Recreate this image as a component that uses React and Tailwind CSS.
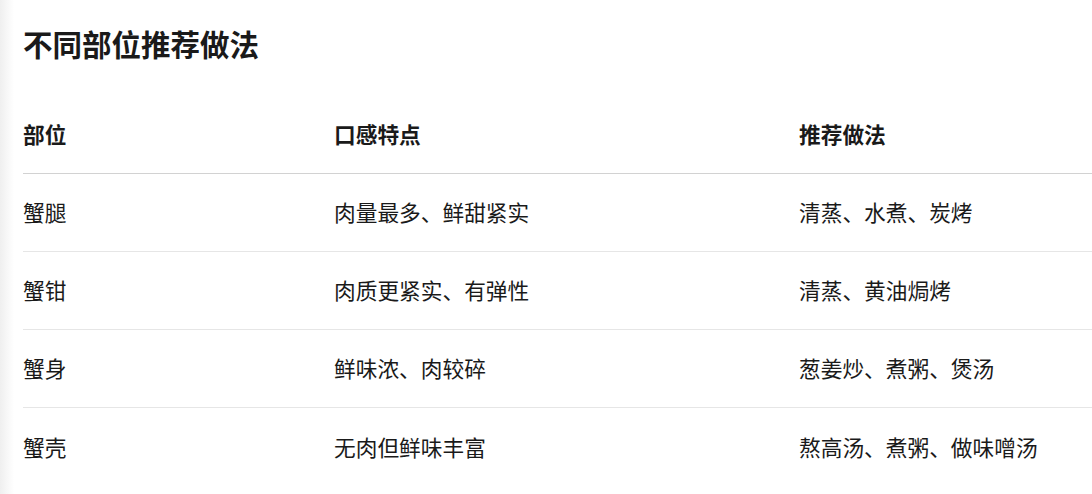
const rows = [
  { part: "蟹腿", taste: "肉量最多、鲜甜紧实", cook: "清蒸、水煮、炭烤" },
  { part: "蟹钳", taste: "肉质更紧实、有弹性", cook: "清蒸、黄油焗烤" },
  { part: "蟹身", taste: "鲜味浓、肉较碎", cook: "葱姜炒、煮粥、煲汤" },
  { part: "蟹壳", taste: "无肉但鲜味丰富", cook: "熬高汤、煮粥、做味噌汤" },
];

export default function App() {
  return (
    <div
      className="min-h-screen w-[1092px] h-[494px] overflow-hidden bg-[linear-gradient(to_right,#efefef,#ffffff_14px)] text-[#1a1a1a]"
      style={{ fontFamily: '"Noto Sans CJK SC", "Noto Sans", sans-serif' }}
    >
      <div className="pl-[23px] pt-[23px]">
        <h2 className="text-[29.5px] leading-[40px] font-bold">不同部位推荐做法</h2>

        <div className="mt-[33px] w-[1100px]">
          {/* header */}
          <div className="grid grid-cols-[311px_465px_1fr] h-[78px] items-center border-b border-[#d2d2d2] text-[21.7px] font-bold">
            <div>部位</div>
            <div>口感特点</div>
            <div>推荐做法</div>
          </div>

          {rows.map((r, i) => (
            <div
              key={r.part}
              className={
                "grid grid-cols-[311px_465px_1fr] h-[78px] items-center text-[21.7px] " +
                (i < rows.length - 1 ? "border-b border-[#e6e6e6]" : "")
              }
            >
              <div>{r.part}</div>
              <div>{r.taste}</div>
              <div>{r.cook}</div>
            </div>
          ))}
        </div>
      </div>
    </div>
  );
}
